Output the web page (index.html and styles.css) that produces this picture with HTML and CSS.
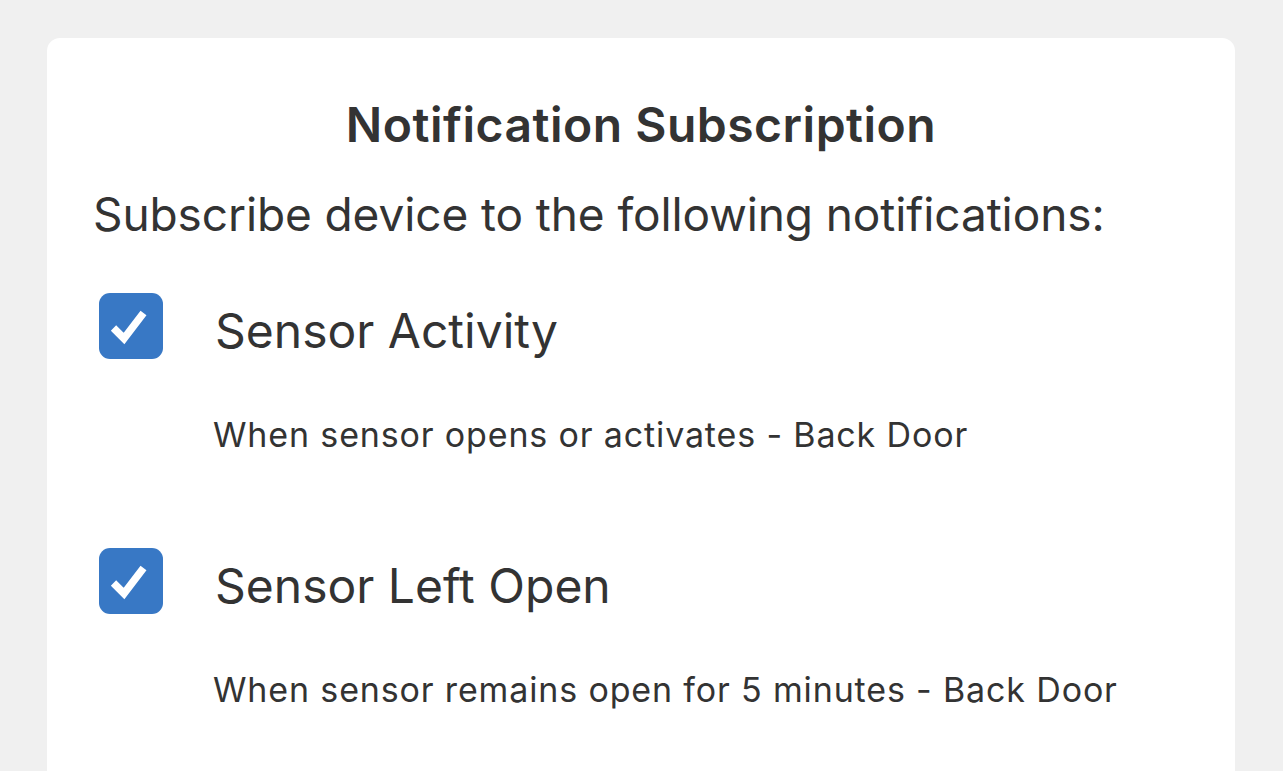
FILE: index.html
```html
<!DOCTYPE html>
<html lang="en">
<head>
	<meta charset="UTF-8" />
	<meta name="viewport" content="width=device-width, initial-scale=1.0" />
	<title>Notification Subscription</title>
	<link rel="stylesheet" href="styles.css">
</head>
<body>
	<div class="card">
		<h2 class="title">Notification Subscription</h2>
		<p class="intro">Subscribe device to the following notifications:</p>

		<div class="option">
			<label class="option-head">
				<span class="check">
					<svg viewBox="0 0 64 66" width="64" height="66"><path d="M14.5 35 L25 45.5 L44.5 20" fill="none" stroke="#fff" stroke-width="7.5"/></svg>
				</span>
				<span class="option-name">Sensor Activity</span>
			</label>
			<p class="option-desc">When sensor opens or activates - Back Door</p>
		</div>

		<div class="option">
			<label class="option-head">
				<span class="check">
					<svg viewBox="0 0 64 66" width="64" height="66"><path d="M14.5 35 L25 45.5 L44.5 20" fill="none" stroke="#fff" stroke-width="7.5"/></svg>
				</span>
				<span class="option-name">Sensor Left Open</span>
			</label>
			<p class="option-desc">When sensor remains open for 5 minutes - Back Door</p>
		</div>
	</div>
</body>
</html>
```

FILE: styles.css
```css
body {
	margin: 0;
	background-color: #f0f0f0;
	font-family: Inter, "Noto Sans", sans-serif;
	color: #333;
}
.card {
	margin: 38px 48px 0 47px;
	padding: 59px 46px 80px 46px;
	background-color: #fff;
	border-radius: 13px;
	min-height: 700px;
}
.title {
	margin: 0;
	font-size: 48px;
	line-height: 56px;
	font-weight: 600;
	letter-spacing: 0.5px;
	text-align: center;
}
.intro {
	margin: 36px 0 0 0;
	font-size: 46px;
	line-height: 50px;
	letter-spacing: -0.1px;
}
.option {
	margin-top: 54px;
	padding-left: 6px;
}
.option + .option {
	margin-top: 93px;
}
.option-head {
	display: flex;
	align-items: flex-start;
	gap: 52px;
}
.check {
	width: 64px;
	height: 66px;
	border-radius: 11px;
	background-color: #3878c5;
	display: block;
}
.check svg {
	display: block;
}
.option-name {
	font-size: 48px;
	line-height: 76px;
}
.option-desc {
	margin: 46px 0 0 114px;
	font-size: 34px;
	line-height: 40px;
	letter-spacing: 0.85px;
}
```
